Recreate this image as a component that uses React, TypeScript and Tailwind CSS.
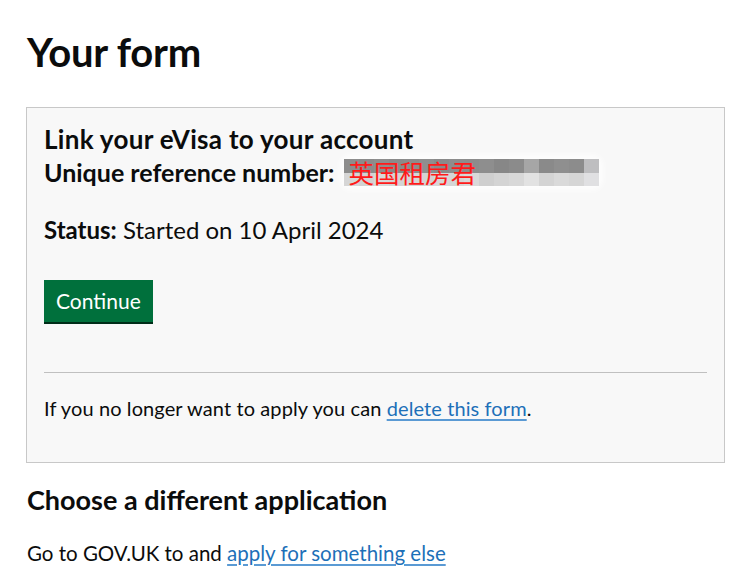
import React from "react";

const topRow = ["#8d8d8d","#8b8b8b","#8e8e8e","#8a8a8a","#8c8c8c","#8f8f8f","#8a8a8a","#8d8d8d","#8c8c8c","#8e8e8e","#878787","#8b8b8b","#a6a6a6","#8a8a8a","#8f8f8f","#8c8c8c","#bebec0"];
const botRow = ["#d6d6d6","#d2d2d2","#d8d8d8","#d4d4d4","#d6d6d6","#d3d3d3","#d7d7d7","#d5d5d5","#d9d9d9","#cfcfcf","#d4d4d4","#d8d8d8","#e2e2e2","#d4d4d4","#dadada","#d6d6d6","#e0e0e2"];

export default function App() {
  return (
    <div className="bg-white w-[754px] h-[586px] overflow-hidden text-[#0b0c0c]" style={{ fontFamily: "Lato, 'Noto Sans CJK SC', sans-serif" }}>
      <div className="pl-[26px] pr-[29px] pt-[30px]">
        <h1 className="text-[40px] leading-[44px] font-bold tracking-[-0.2px] pl-px">Your form</h1>
        <div className="mt-[33px] border border-[#c8c8c8] bg-[#f8f8f8] px-[17px] pt-[15px] pb-[38px]">
          <h2 className="text-[26px] leading-[32px] font-bold tracking-[0.3px]">Link your eVisa to your account</h2>
          <div className="flex items-center">
            <span className="text-[25px] leading-[34px] font-bold">Unique reference number:</span>
            <div className="relative ml-[9px] w-[255px] h-[27px] rounded-[6px] shadow-[0_0_6px_4px_rgba(255,255,255,0.8)]">
              <div className="flex h-[14px]">
                {topRow.map((c, i) => (
                  <div key={i} className="w-[15px] h-full" style={{ backgroundColor: c }} />
                ))}
              </div>
              <div className="flex h-[13px]">
                {botRow.map((c, i) => (
                  <div key={i} className="w-[15px] h-full" style={{ backgroundColor: c }} />
                ))}
              </div>
              <span className="absolute left-[5px] top-[-4px] text-[25.5px] leading-[34px] text-[#ff1a1a]" style={{ fontFamily: "'Noto Sans CJK SC', sans-serif" }}>英国租房君</span>
            </div>
          </div>
          <p className="mt-[25px] text-[24px] leading-[32px]"><span className="font-bold">Status:</span> Started on 10 April 2024</p>
          <button className="mt-[34px] bg-[#00703c] text-white text-[21px] leading-[26px] px-[12px] pt-[8px] pb-[8px] shadow-[0_2px_0_#002d18]">Continue</button>
          <hr className="mt-[50px] border-t border-[#c0c0c0]" />
          <p className="mt-[22px] text-[20px] leading-[26px] tracking-[0.1px] mb-[3px]">If you no longer want to apply you can <a className="text-[#1d70b8] underline underline-offset-[3px] decoration-[#5a9ad4]">delete this form</a>.</p>
        </div>
        <h2 className="mt-[21px] text-[27px] leading-[32px] font-bold pl-px">Choose a different application</h2>
        <p className="mt-[23px] text-[20.5px] leading-[28px] pl-px">Go to GOV.UK to and <a className="text-[#1d70b8] underline underline-offset-[3px] decoration-[#5a9ad4]">apply for something else</a></p>
      </div>
    </div>
  );
}
